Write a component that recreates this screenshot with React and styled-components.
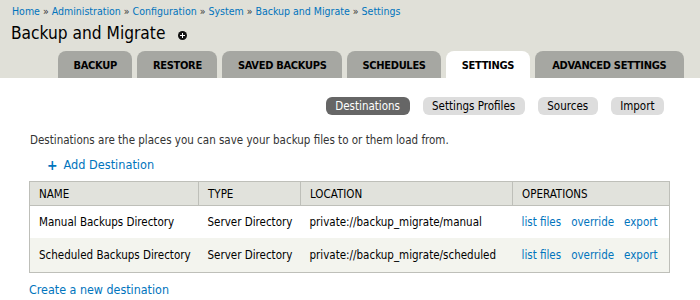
import React from "react";
import { styled, createGlobalStyle } from "styled-components";

const Global = createGlobalStyle`
  html, body {
    margin: 0;
    padding: 0;
    background: #fff;
  }
  body {
    font-family: "DejaVu Sans Condensed", "DejaVu Sans", Verdana, sans-serif;
    font-size: 11.5px;
    color: #333;
  }
  a {
    color: #0074bd;
    text-decoration: none;
  }
`;

const Header = styled.div`
  background: #e0e0d8;
  padding: 4px 0 0 12px;
`;

const Breadcrumb = styled.div`
  font-size: 10.5px;
  line-height: 14px;
  color: #333;
`;

const Title = styled.h1`
  margin: 2px 0 0 -1px;
  font-size: 17.2px;
  font-weight: normal;
  line-height: 26px;
  color: #000;
  display: flex;
  align-items: center;
  gap: 13px;
`;

const Shortcut = styled.span`
  width: 9px;
  height: 9px;
  border-radius: 50%;
  background: #111;
  position: relative;
  top: 2px;
  &::before,
  &::after {
    content: "";
    position: absolute;
    background: #fff;
    left: 2px;
    top: 4px;
    width: 5px;
    height: 1px;
  }
  &::after {
    left: 4px;
    top: 2px;
    width: 1px;
    height: 5px;
  }
`;

const Tabs = styled.div`
  display: flex;
  gap: 5px;
  margin: 5px 0 0 46px;
`;

const Tab = styled.a`
  display: block;
  flex-shrink: 0;
  white-space: nowrap;
  height: 27px;
  line-height: 29px;
  padding: 0 ${(p) => p.$pad || 15.5}px;
  border-radius: 8px 8px 0 0;
  background: ${(p) => (p.$active ? "#fff" : "#a6a7a2")};
  color: #000;
  font-weight: bold;
  font-size: 11px;
  letter-spacing: -0.3px;
  text-transform: uppercase;
`;

const Content = styled.div`
  padding: 19px 30px 0 29px;
`;

const SubTabs = styled.div`
  display: flex;
  justify-content: flex-end;
  gap: 13px;
  padding-right: 6px;
`;

const SubTab = styled.a`
  height: 18px;
  line-height: 18px;
  padding: 0 9.5px;
  border-radius: 6px;
  background: ${(p) => (p.$active ? "#666" : "#ddd")};
  color: ${(p) => (p.$active ? "#fff" : "#000")};
`;

const Desc = styled.p`
  margin: 17px 0 0 1px;
  line-height: 16px;
`;

const ActionLink = styled.a`
  display: inline-flex;
  align-items: center;
  gap: 6px;
  margin: 9px 0 0 18px;
  font-size: 12.6px;
  line-height: 16px;
  &::before {
    content: "+";
    font-weight: bold;
    font-size: 14px;
  }
`;

const Table = styled.table`
  width: 100%;
  margin-top: 8px;
  table-layout: fixed;
  border-collapse: collapse;
  border: 1px solid #bebfb9;
`;

const Th = styled.th`
  box-sizing: border-box;
  text-align: left;
  font-weight: normal;
  text-transform: uppercase;
  background: #e1e2dc;
  border: 1px solid #bebfb9;
  height: 24px;
  padding: 0 9px;
  color: #000;
  width: ${(p) => (p.$w ? `${p.$w}px` : "auto")};
`;

const Row = styled.tr`
  background: ${(p) => (p.$even ? "#f3f4ee" : "#fff")};
`;

const Td = styled.td`
  height: ${(p) => p.$h || 32}px;
  padding: 0 9px;
  color: #000;
  white-space: nowrap;
`;

const Ops = styled.div`
  display: flex;
  gap: 10px;
`;

const Footer = styled.a`
  display: block;
  margin-top: 9px;
  font-size: 12.4px;
  line-height: 16px;
`;

const rows = [
  ["Manual Backups Directory", "private://backup_migrate/manual"],
  ["Scheduled Backups Directory", "private://backup_migrate/scheduled"],
];

const App = () => {
  return (
    <>
      <Global />
      <Header>
        <Breadcrumb>
          <a href="#">Home</a> » <a href="#">Administration</a> »{" "}
          <a href="#">Configuration</a> » <a href="#">System</a> »{" "}
          <a href="#">Backup and Migrate</a> » <a href="#">Settings</a>
        </Breadcrumb>
        <Title>
          Backup and Migrate
          <Shortcut />
        </Title>
        <Tabs>
          <Tab href="#">Backup</Tab>
          <Tab href="#">Restore</Tab>
          <Tab href="#">Saved Backups</Tab>
          <Tab href="#">Schedules</Tab>
          <Tab href="#" $active>
            Settings
          </Tab>
          <Tab href="#" $pad={17.5}>
            Advanced Settings
          </Tab>
        </Tabs>
      </Header>
      <Content>
        <SubTabs>
          <SubTab href="#" $active>
            Destinations
          </SubTab>
          <SubTab href="#">Settings Profiles</SubTab>
          <SubTab href="#">Sources</SubTab>
          <SubTab href="#">Import</SubTab>
        </SubTabs>
        <Desc>
          Destinations are the places you can save your backup files to or them
          load from.
        </Desc>
        <ActionLink href="#">Add Destination</ActionLink>
        <Table>
          <thead>
            <tr>
              <Th $w={169}>Name</Th>
              <Th $w={102}>Type</Th>
              <Th $w={212}>Location</Th>
              <Th>Operations</Th>
            </tr>
          </thead>
          <tbody>
            {rows.map(([name, loc], i) => (
              <Row key={name} $even={i % 2 === 1}>
                <Td $h={i ? 34 : 32}>{name}</Td>
                <Td>Server Directory</Td>
                <Td>{loc}</Td>
                <Td>
                  <Ops>
                    <a href="#">list files</a>
                    <a href="#">override</a>
                    <a href="#">export</a>
                  </Ops>
                </Td>
              </Row>
            ))}
          </tbody>
        </Table>
        <Footer href="#">Create a new destination</Footer>
      </Content>
    </>
  );
};

export default App;
